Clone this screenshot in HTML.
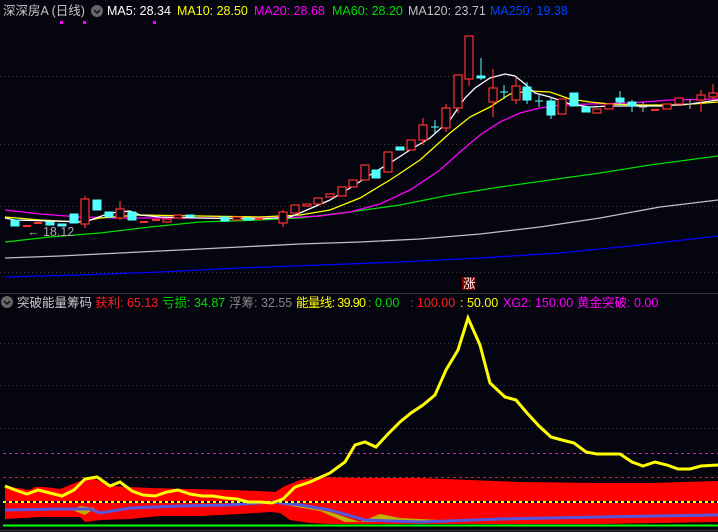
<!DOCTYPE html>
<html><head><meta charset="utf-8"><style>
html,body{margin:0;padding:0;background:#05050f;width:718px;height:532px;overflow:hidden}
svg{display:block}
text{font-family:"Liberation Sans","Noto Sans CJK SC",sans-serif;font-size:12.5px}
</style></head><body>
<svg width="718" height="532" viewBox="0 0 718 532" xmlns="http://www.w3.org/2000/svg">
<rect width="718" height="532" fill="#05050f"/>
<g stroke="#3a3a3a" stroke-dasharray="1,3" stroke-width="1">
<line x1="0" y1="76.5" x2="718" y2="76.5"/><line x1="0" y1="144.5" x2="718" y2="144.5"/>
<line x1="0" y1="206.5" x2="718" y2="206.5"/><line x1="0" y1="272.5" x2="718" y2="272.5"/>
<line x1="0" y1="343.5" x2="718" y2="343.5"/><line x1="0" y1="385.5" x2="718" y2="385.5"/><line x1="0" y1="428.5" x2="718" y2="428.5"/>
</g>
<line x1="0" y1="293.5" x2="718" y2="293.5" stroke="#333"/>
<g fill="none" stroke-width="1.3">
<polyline stroke="#0000ff" points="5,277 80,275 160,272 240,268 320,265 400,262 480,258 560,253 640,245 718,236"/>
<polyline stroke="#c0c0c0" points="5,258 60,256 120,253 180,250 240,247 300,244 360,242 420,239 480,234 540,227 600,218 660,207 718,200"/>
<polyline stroke="#00dd00" points="5,242 50,237 100,233 150,227 200,222 260,220 300,218 350,212 400,205 450,195 500,187 550,180 600,173 650,165 718,156"/>
<polyline stroke="#ff00ff" points="5,210 40,214 80,217 120,218 200,218 280,218 320,216 350,212 380,204 410,190 440,170 460,152 480,135 500,122 520,113 540,108 560,105 590,104 630,103 670,100 718,99"/>
<polyline stroke="#ffff00" points="5,217 40,220 80,222 100,218 140,215 200,216 260,217 300,215 330,210 360,198 390,180 420,160 450,133 470,117 490,107 510,94 530,91 550,92 570,99 590,102 610,104 640,105 680,105 718,102"/>
<polyline stroke="#ffffff" points="5,218 15,220 50,221 85,222 110,213 130,211 140,215 160,217 200,218 260,219 290,217 300,213 330,200 350,188 370,175 390,163 410,150 430,138 450,120 465,98 475,88 490,78 505,74 515,76 525,84 535,93 550,97 570,104 590,107 610,106 630,106 660,106 690,104 718,100"/>
</g>
<g fill="#05050f" stroke="#ff3232" stroke-width="1.2">
<line x1="85" y1="196" x2="85" y2="228"/><rect x="81" y="199" width="8" height="25"/>
<line x1="120" y1="201" x2="120" y2="220"/><rect x="116" y="209" width="8" height="9"/>
<rect x="163" y="219" width="8" height="3"/><rect x="174" y="215" width="8" height="3"/>
<rect x="233" y="217" width="8" height="3"/>
<line x1="283" y1="210" x2="283" y2="227"/><rect x="279" y="212" width="8" height="11"/>
<rect x="291" y="205" width="8" height="8"/><rect x="303" y="204" width="8" height="2"/>
<rect x="314" y="198" width="8" height="6"/><rect x="326" y="194" width="8" height="3"/>
<rect x="338" y="187" width="8" height="9"/><rect x="349" y="180" width="8" height="7"/>
<rect x="361" y="165" width="8" height="15"/><rect x="384" y="152" width="8" height="20"/>
<rect x="407" y="140" width="8" height="10"/>
<line x1="423" y1="118" x2="423" y2="145"/><rect x="419" y="125" width="8" height="15"/>
<line x1="446" y1="104" x2="446" y2="132"/><rect x="442" y="108" width="8" height="20"/>
<line x1="458" y1="75" x2="458" y2="113"/><rect x="454" y="75" width="8" height="33"/>
<line x1="469" y1="36" x2="469" y2="86"/><rect x="465" y="36" width="8" height="43"/>
<line x1="493" y1="69" x2="493" y2="117"/><rect x="489" y="88" width="8" height="14"/>
<line x1="516" y1="78" x2="516" y2="104"/><rect x="512" y="86" width="8" height="14"/>
<rect x="558" y="99" width="8" height="15"/>
<rect x="593" y="109" width="8" height="4"/><rect x="605" y="104" width="8" height="5"/>
<rect x="663" y="104" width="8" height="5"/><rect x="675" y="98" width="8" height="6"/>
<line x1="701" y1="90" x2="701" y2="112"/><rect x="697" y="95" width="8" height="5"/>
<line x1="713" y1="84" x2="713" y2="100"/><rect x="709" y="93" width="8" height="4"/>
</g>
<g fill="#ff3232">
<rect x="23" y="225" width="8" height="2"/><rect x="34" y="222" width="8" height="2"/>
<rect x="140" y="221" width="8" height="2"/><rect x="152" y="219" width="8" height="2"/>
<rect x="255" y="218" width="8" height="2"/><rect x="651" y="109" width="8" height="2"/>
</g>
<g fill="#54ffff" stroke="#54ffff">
<rect x="11" y="220" width="8" height="6"/><rect x="46" y="222" width="8" height="3"/>
<rect x="58" y="224" width="8" height="2"/><rect x="70" y="214" width="8" height="9"/>
<rect x="93" y="200" width="8" height="10"/><rect x="105" y="212" width="8" height="5"/>
<rect x="128" y="212" width="8" height="8"/><rect x="186" y="215" width="8" height="2"/>
<rect x="221" y="217" width="8" height="4"/><rect x="244" y="218" width="8" height="2"/>
<rect x="372" y="170" width="8" height="8"/><rect x="396" y="147" width="8" height="3"/>
<line x1="481" y1="58" x2="481" y2="80"/><rect x="477" y="76" width="8" height="2"/>
<line x1="527" y1="82" x2="527" y2="104"/><rect x="523" y="87" width="8" height="13"/>
<line x1="551" y1="97" x2="551" y2="119"/><rect x="547" y="101" width="8" height="14"/>
<rect x="570" y="93" width="8" height="13"/><rect x="582" y="107" width="8" height="5"/>
<line x1="620" y1="91" x2="620" y2="106"/><rect x="616" y="98" width="8" height="4"/>
<line x1="632" y1="100" x2="632" y2="112"/><rect x="628" y="102" width="8" height="4"/>
<line x1="435" y1="120" x2="435" y2="133"/><line x1="431" y1="127" x2="439" y2="127"/>
<line x1="504" y1="85" x2="504" y2="99"/><line x1="500" y1="92" x2="508" y2="92"/>
<line x1="539" y1="95" x2="539" y2="107"/><line x1="535" y1="101" x2="543" y2="101"/>
</g>
<g stroke="#bbb"><line x1="643" y1="102" x2="643" y2="112"/><line x1="639" y1="107" x2="647" y2="107"/>
<line x1="690" y1="99" x2="690" y2="109"/><line x1="686" y1="104" x2="694" y2="104"/></g>
<text x="27" y="236" fill="#aaaaaa" font-size="12">← 18.12</text>
<text x="3" y="15" fill="#c8c8c8">深深房A (日线)</text>
<circle cx="97" cy="11" r="6" fill="#666"/><path d="M94 10 L97 13 L100 10" stroke="#111" fill="none" stroke-width="1.5"/>
<text x="107" y="15" fill="#ffffff">MA5: 28.34</text>
<text x="177" y="15" fill="#ffff00">MA10: 28.50</text>
<text x="254" y="15" fill="#ff00ff">MA20: 28.68</text>
<text x="332" y="15" fill="#00dd00">MA60: 28.20</text>
<text x="408" y="15" fill="#c0c0c0">MA120: 23.71</text>
<text x="490" y="15" fill="#0044ff">MA250: 19.38</text>
<g fill="#ff00ff"><rect x="60" y="21" width="3" height="3"/><rect x="83" y="21" width="3" height="3"/><rect x="153" y="21" width="3" height="3"/></g>
<rect x="462" y="277" width="13" height="13" fill="#7a0000"/><text x="463" y="288" fill="#fff" font-size="11">涨</text>
<circle cx="7" cy="302" r="6" fill="#666"/><path d="M4 301 L7 304 L10 301" stroke="#111" fill="none" stroke-width="1.5"/>
<text x="17" y="307" fill="#c8c8c8">突破能量筹码</text>
<text x="95" y="307" fill="#ff2020">获利: 65.13</text>
<text x="162" y="307" fill="#00dd00">亏损: 34.87</text>
<text x="229" y="307" fill="#888">浮筹: 32.55</text>
<text x="296" y="307" fill="#ffff00" textLength="70">能量线: 39.90</text>
<text x="368" y="307" fill="#00dd00">: 0.00</text>
<text x="410" y="307" fill="#ff2020">: 100.00</text>
<text x="460" y="307" fill="#ffff00">: 50.00</text>
<text x="503" y="307" fill="#ff00ff">XG2: 150.00</text>
<text x="577" y="307" fill="#ff00ff">黄金突破: 0.00</text>
<polygon fill="#ff0000" points="5,486 30,490 35,487 45,487 60,489 90,477 110,486 150,488 230,490 260,491 275,492 285,486 300,480 320,477 360,478 420,478 470,480 520,482 600,483 650,483 718,481 718,522 600,524 360,524 330,524 310,523 290,520 280,513 270,512 240,514 200,516 160,516 130,519 100,520 85,522 80,517 40,517 5,519"/>
<polygon fill="#c0b000" points="72,510 85,515 95,508 80,506"/>
<polygon fill="#c0b000" points="272,502 300,506 330,512 360,522 345,522 320,511 285,505"/>
<polygon fill="#c0b000" points="360,522 380,514 400,518 440,520 470,522"/>
<polyline fill="none" stroke="#5555dd" stroke-width="3" points="5,510 60,509 90,509 100,513 130,508 180,506 230,505 272,502 300,505 330,510 365,520 420,522 500,519 600,517 718,515"/>
<g stroke-dasharray="3,3" stroke-width="1">
<line x1="3" y1="453.5" x2="718" y2="453.5" stroke="#cc22cc"/>
<line x1="3" y1="477.5" x2="718" y2="477.5" stroke="#cc2222"/>
</g>
<line x1="3" y1="502" x2="718" y2="502" stroke="#111" stroke-width="2"/>
<line x1="3" y1="502" x2="718" y2="502" stroke="#ffff00" stroke-width="2" stroke-dasharray="3,3"/>
<polyline fill="none" stroke="#ffff00" stroke-width="3" points="5,486 15,490 27,494 38,490 50,493 62,496 74,490 85,479 97,477 110,486 120,482 132,491 143,495 155,496 167,492 178,490 190,494 202,496 213,496 225,498 237,499 248,502 260,502 272,503 283,499 295,487 310,482 330,473 345,462 355,445 365,442 376,447 388,434 400,422 411,413 423,405 435,395 446,370 458,350 468,318 480,345 490,383 505,397 516,400 527,413 539,426 551,437 562,440 574,443 586,452 597,454 609,454 620,454 632,462 643,466 655,462 667,465 678,469 690,469 701,466 718,465"/>
<line x1="3" y1="525.5" x2="718" y2="525.5" stroke="#00ff00" stroke-width="2"/>
<line x1="0" y1="530.5" x2="718" y2="530.5" stroke="#333" stroke-width="1.5"/>
</svg>
</body></html>
